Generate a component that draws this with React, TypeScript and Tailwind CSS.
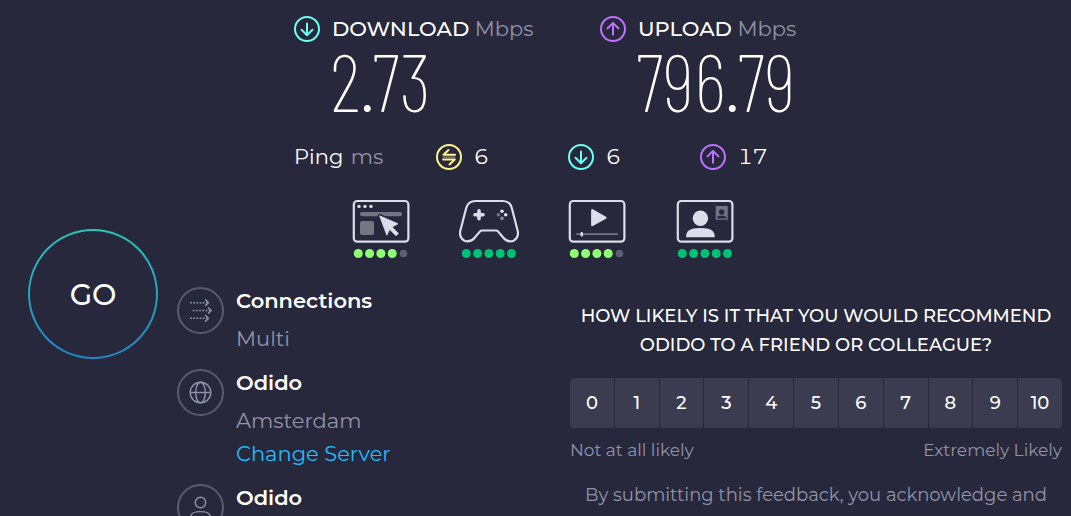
import type { ReactNode } from "react";

const scores = [0, 1, 2, 3, 4, 5, 6, 7, 8, 9, 10];

const DownIcon = () => (
  <svg width="26" height="26" viewBox="0 0 26 26" fill="none" stroke="#6afff3" strokeWidth="2" strokeLinecap="round" strokeLinejoin="round" aria-hidden="true">
    <circle cx="13" cy="13" r="12" />
    <path d="M13 7.5V19M7.5 13.8L13 19.2L18.5 13.8" />
  </svg>
);

const UpIcon = () => (
  <svg width="26" height="26" viewBox="0 0 26 26" fill="none" stroke="#bf71ff" strokeWidth="2" strokeLinecap="round" strokeLinejoin="round" aria-hidden="true">
    <circle cx="13" cy="13" r="12" />
    <path d="M13 18.8V7.2M7.5 12.4L13 7L18.5 12.4" />
  </svg>
);

const IdleIcon = () => (
  <svg width="26" height="26" viewBox="0 0 26 26" fill="none" stroke="#fff38e" strokeWidth="2" strokeLinecap="round" strokeLinejoin="round" aria-hidden="true">
    <circle cx="13" cy="13" r="12" />
    <path d="M12.5 6L7.5 10.8H19M7.2 15.4H18.8L13.5 20.4" />
    <path d="M7 13.1H19" strokeWidth="1" strokeOpacity="0.6" />
  </svg>
);

const BrowserIcon = () => (
  <svg width="58" height="44" viewBox="0 0 58 44" aria-hidden="true">
    <rect x="1.8" y="2" width="54.6" height="40.7" rx="3.5" fill="none" stroke="#dcdde8" strokeWidth="2.2" />
    <g fill="#dcdde8">
      <circle cx="7" cy="7.4" r="1.7" />
      <circle cx="13" cy="7.4" r="1.7" />
      <circle cx="19" cy="7.4" r="1.7" />
    </g>
    <rect x="8" y="13" width="42" height="4.2" rx="2" fill="#747482" />
    <rect x="8" y="22" width="14" height="14" rx="2" fill="#747482" />
    <path
      d="M27.6 16.8L46 24.8L40 28L46.4 34.4L44 36.8L37.7 30.4L34.8 36.2Z"
      fill="#27283c"
      stroke="#27283c"
      strokeWidth="4"
      strokeLinejoin="round"
    />
    <path
      d="M27.6 16.8L46 24.8L40 28L46.4 34.4L44 36.8L37.7 30.4L34.8 36.2Z"
      fill="#dcdde8"
      stroke="#dcdde8"
      strokeWidth="0.8"
      strokeLinejoin="round"
    />
  </svg>
);

const GamepadIcon = () => (
  <svg width="60" height="44" viewBox="0 0 60 44" aria-hidden="true">
    <path
      d="M16.5 2H43.5C48.5 2 51.6 4.6 52.8 9L58.6 31.5C60.2 37.5 56.5 42.3 51.5 42.3C48.3 42.3 46.2 41 44.6 39L39 32.4Q38.3 31.5 37 31.5H23Q21.7 31.5 21 32.4L15.4 39C13.8 41 11.7 42.3 8.5 42.3C3.5 42.3 -0.2 37.5 1.4 31.5L7.2 9C8.4 4.6 11.5 2 16.5 2Z"
      fill="none"
      stroke="#dcdde8"
      strokeWidth="2.2"
    />
    <path d="M20 11.7V19.7M16 15.7H24" stroke="#dcdde8" strokeWidth="3.6" strokeLinecap="round" />
    <circle cx="43" cy="12.3" r="1.8" fill="#dcdde8" />
    <circle cx="46.7" cy="15.8" r="1.8" fill="#dcdde8" />
    <circle cx="39.4" cy="15.8" r="1.8" fill="#747482" />
    <circle cx="43" cy="19.4" r="1.8" fill="#8b8b99" />
  </svg>
);

const VideoIcon = () => (
  <svg width="58" height="44" viewBox="0 0 58 44" aria-hidden="true">
    <rect x="1.8" y="2" width="54.6" height="40.7" rx="3.5" fill="none" stroke="#dcdde8" strokeWidth="2.2" />
    <path d="M24.3 11.3V26L37.4 18.7Z" fill="#dcdde8" stroke="#dcdde8" strokeWidth="2.4" strokeLinejoin="round" />
    <path d="M8.3 35.1H50" stroke="#747482" strokeWidth="1.8" />
    <rect x="12.5" y="33" width="2.5" height="4.4" rx="1" fill="#dcdde8" />
  </svg>
);

const CallIcon = () => (
  <svg width="58" height="44" viewBox="0 0 58 44" aria-hidden="true">
    <rect x="1.8" y="2" width="54.6" height="40.7" rx="3.5" fill="none" stroke="#dcdde8" strokeWidth="2.2" />
    <circle cx="24.4" cy="19.3" r="7.7" fill="#dcdde8" />
    <path d="M10 38.2C10 32 13.5 29 24.4 29S38.8 32 38.8 38.2Z" fill="#dcdde8" />
    <rect x="39.7" y="7" width="12" height="13.8" fill="#747482" />
    <circle cx="45.7" cy="13" r="2.8" fill="#27283c" />
    <path d="M41 19.6C41 17.2 43 16.8 45.7 16.8S50.4 17.2 50.4 19.6Z" fill="#27283c" />
  </svg>
);

const ConnectionsIcon = () => (
  <svg width="47" height="47" viewBox="0 0 47 47" fill="none" stroke="#9193a8" strokeWidth="1.5" aria-hidden="true">
    <circle cx="23.5" cy="23.5" r="22.5" stroke="#5b5a70" strokeWidth="2" />
    <path d="M13 15.7H30M15.7 23.5H33M13 31.3H30" strokeDasharray="1.8 1.4" />
    <path d="M28.6 12.9L31.4 15.7L28.6 18.5M31.4 20.7L34.2 23.5L31.4 26.3M28.6 28.5L31.4 31.3L28.6 34.1" strokeLinecap="round" strokeLinejoin="round" />
  </svg>
);

const GlobeIcon = () => (
  <svg width="47" height="47" viewBox="0 0 47 47" fill="none" stroke="#9193a8" strokeWidth="1.4" aria-hidden="true">
    <circle cx="23.5" cy="23.5" r="22.5" stroke="#5b5a70" strokeWidth="2" />
    <circle cx="23.5" cy="23.5" r="10.3" />
    <ellipse cx="23.5" cy="23.5" rx="4.8" ry="10.3" />
    <path d="M13.2 23.5H33.8" />
  </svg>
);

const UserIcon = () => (
  <svg width="47" height="47" viewBox="0 0 47 47" fill="none" stroke="#9193a8" strokeWidth="1.4" aria-hidden="true">
    <circle cx="23.5" cy="23.5" r="22.5" stroke="#5b5a70" strokeWidth="2" />
    <circle cx="23.5" cy="18.5" r="5.2" />
    <path d="M13.5 34C13.5 29.5 16 27.6 23.5 27.6S33.5 29.5 33.5 34Z" />
  </svg>
);

const Speed = ({ icon, name, value }: { icon: ReactNode; name: string; value: string }) => (
  <div className="w-[306px]">
    <h2 className="flex items-center gap-3 text-[21px] leading-8">
      {icon}
      <span>
        <span className="font-medium">{name}</span>{" "}
        <span className="text-[#9193a8]">Mbps</span>
      </span>
    </h2>
    <p className="pl-9 font-['Barlow_Condensed','Roboto_Condensed',sans-serif] text-[80px] leading-[70px] font-extralight">
      {value}
    </p>
  </div>
);

const Ping = ({ icon, value }: { icon: ReactNode; value: number }) => (
  <div className="flex w-[132px] items-center gap-3 tabular-nums">
    {icon}
    <span>{value}</span>
  </div>
);

const Rating = ({ icon, score, color }: { icon: ReactNode; score: number; color: string }) => (
  <div className="flex w-[108px] flex-col items-center gap-[6px]">
    {icon}
    <svg width="56" height="9" viewBox="0 0 56 9" role="img" aria-label={`${score} out of 5`}>
      {[0, 1, 2, 3, 4].map((i) => (
        <circle key={i} cx={5.3 + i * 11.3} cy="4.5" r={i < score ? 4.5 : 3.8} fill={i < score ? color : "#5e5e74"} />
      ))}
    </svg>
  </div>
);

const Detail = ({ icon, title, children }: { icon: ReactNode; title: string; children: ReactNode }) => (
  <li className="flex items-start gap-3">
    {icon}
    <div className="leading-[33px]">
      <h3 className="mb-[7px] leading-7 font-semibold">{title}</h3>
      {children}
    </div>
  </li>
);

const Survey = () => (
  <section className="flex-1 pt-[15px] pr-[9px] text-center text-[18px] leading-[29px]">
    <h2 className="font-medium">
      HOW LIKELY IS IT THAT YOU WOULD RECOMMEND ODIDO TO A FRIEND OR COLLEAGUE?
    </h2>

    <div className="mt-[18px] flex gap-px overflow-hidden rounded">
      {scores.map((score) => (
        <button key={score} type="button" className="h-[50px] flex-1 bg-[#3c3c50] font-medium">
          {score}
        </button>
      ))}
    </div>

    <div className="mt-2 flex justify-between text-[17px] text-[#9193a8]">
      <span>Not at all likely</span>
      <span>Extremely Likely</span>
    </div>

    <p className="mt-4 text-[#9193a8]">
      By submitting this feedback, you acknowledge and
    </p>
  </section>
);

const App = () => {
  return (
    <main className="flex h-screen overflow-hidden bg-[#27283c] font-['Montserrat',sans-serif] text-[21px] text-white">
      <div className="shrink-0 pt-[229px] pr-[19px] pl-7">
        <button
          type="button"
          className="size-[130px] rounded-full bg-linear-to-b from-[#2cc5b5] to-[#2484c4] p-[2px]"
        >
          <span className="flex size-full items-center justify-center rounded-full bg-[#27283c] pt-[2px] text-[29px] font-medium">
            GO
          </span>
        </button>
      </div>

      <div className="min-w-0 flex-1">
        <section className="pt-[13px] pl-[117px]">
          <div className="flex">
            <Speed icon={<DownIcon />} name="DOWNLOAD" value="2.73" />
            <Speed icon={<UpIcon />} name="UPLOAD" value="796.79" />
          </div>

          <div className="mt-[26px] flex leading-8">
            <h2 className="w-[142px]">
              Ping <span className="ml-[2px] text-[#9193a8]">ms</span>
            </h2>
            <Ping icon={<IdleIcon />} value={6} />
            <Ping icon={<DownIcon />} value={6} />
            <Ping icon={<UpIcon />} value={17} />
          </div>

          <div className="mt-[26px] flex pl-[33px]">
            <Rating icon={<BrowserIcon />} score={4} color="#8eff72" />
            <Rating icon={<GamepadIcon />} score={5} color="#00c274" />
            <Rating icon={<VideoIcon />} score={4} color="#8eff72" />
            <Rating icon={<CallIcon />} score={5} color="#00c274" />
          </div>
        </section>

        <div className="mt-[29px] flex">
          <ul className="w-[393px] shrink-0 space-y-[14px]">
            <Detail icon={<ConnectionsIcon />} title="Connections">
              <p className="text-[#9193a8]">Multi</p>
            </Detail>
            <Detail icon={<GlobeIcon />} title="Odido">
              <p className="text-[#9193a8]">Amsterdam</p>
              <a href="#servers" className="text-[#1cbfff]">
                Change Server
              </a>
            </Detail>
            <Detail icon={<UserIcon />} title="Odido">
              {null}
            </Detail>
          </ul>

          <Survey />
        </div>
      </div>
    </main>
  );
};

export default App;
